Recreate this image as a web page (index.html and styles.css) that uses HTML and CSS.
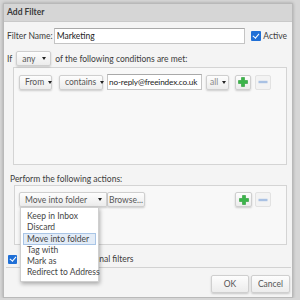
FILE: index.html
```html
<!DOCTYPE html>
<html>
<head>
	<meta charset="utf-8">
	<title>Add Filter</title>
	<link rel="stylesheet" href="styles.css">
</head>
<body>

<div class="dialog">
	<div class="dialog-head">Add Filter</div>
	<div class="dialog-body">

		<div class="row name-row">
			<label>Filter Name:</label>
			<input class="text name-input" type="text" value="Marketing">
			<span class="check"></span>
			<span>Active</span>
		</div>

		<div class="row if-row">
			<span>If</span>
			<span class="btn sel any-sel">any<i class="caret"></i></span>
			<span>of the following conditions are met:</span>
		</div>

		<div class="box cond-box">
			<div class="row">
				<span class="btn sel from-sel">From<i class="caret"></i></span>
				<span class="btn sel contains-sel">contains<i class="caret"></i></span>
				<input class="text mail-input" type="text" value="no-reply@freeindex.co.uk">
				<span class="btn sel all-sel">all<i class="caret"></i></span>
				<span class="btn icon-btn"><svg width="10" height="10" viewBox="0 0 10 10"><path d="M3.5 0.5h3v3h3v3h-3v3h-3v-3h-3v-3h3z" fill="#3bb54a" stroke="#2a9a36" stroke-width="0.6"/></svg></span>
				<span class="btn icon-btn off"><svg width="10" height="10" viewBox="0 0 10 10"><rect x="0.5" y="3.8" width="9" height="2.4" fill="#a9c1e3"/></svg></span>
			</div>
		</div>

		<div class="perform">Perform the following actions:</div>

		<div class="box act-box">
			<div class="row">
				<div class="menu-wrap">
					<span class="btn sel action-sel">Move into folder<i class="caret"></i></span>
					<ul class="menu">
						<li>Keep in Inbox</li>
						<li>Discard</li>
						<li class="on">Move into folder</li>
						<li>Tag with</li>
						<li>Mark as</li>
						<li>Redirect to Address</li>
					</ul>
				</div>
				<span class="btn browse">Browse...</span>
				<span class="grow"></span>
				<span class="btn icon-btn"><svg width="10" height="10" viewBox="0 0 10 10"><path d="M3.5 0.5h3v3h3v3h-3v3h-3v-3h-3v-3h3z" fill="#3bb54a" stroke="#2a9a36" stroke-width="0.6"/></svg></span>
				<span class="btn icon-btn off"><svg width="10" height="10" viewBox="0 0 10 10"><rect x="0.5" y="3.8" width="9" height="2.4" fill="#a9c1e3"/></svg></span>
			</div>
		</div>

		<div class="row stop-row">
			<span class="check"></span>
			<span>Don't process additional filters</span>
		</div>

		<div class="foot">
			<span class="btn ok">OK</span>
			<span class="btn cancel">Cancel</span>
		</div>
	</div>
</div>

</body>
</html>
```

FILE: styles.css
```css
body{margin: 0; background: #d6d6d6; font-family: Lato, "Liberation Sans", sans-serif; font-size: 8.5px; color: #3c3c3c;}
ul{margin: 0; padding: 0; list-style: none;}

.dialog{
	margin: 3px 7px 0 3px;
	height: 293px;
	background: #f4f4f4;
	border: 1px solid #b9b9b9;
	box-shadow: 0 0 3px rgba(0,0,0,0.25);
	white-space: nowrap;
}
.dialog-head{
	height: 17px;line-height: 17px;
	padding-left: 3px;
	background: #d6d6d6;
	border-bottom: 1px solid #c9c9c9;
	font-weight: bold;font-size: 8.5px;color: #3a3a3a;
}
.dialog-body{padding: 0 5px 0 3px;}

.row{display: flex;align-items: center;}
.name-row{margin-top: 6px;height: 16px;}
.text{
	box-sizing: border-box;
	height: 16px;
	border: 1px solid #c4c4c4;border-top-color: #a9a9a9;
	background: #fff;
	font: inherit;color: #222;
	padding: 0 2px;
}
.name-input{width: 206px;margin: 0 6px 0 1px;}
.check{
	display: inline-block;box-sizing: border-box;flex: none;
	width: 9px;height: 9px;margin-right: 2px;
	background: #1f6fd6;border-radius: 1px;
	position: relative;
}
.name-row .check{width: 10px;height: 10px;}
.check::after{
	content: "";position: absolute;
	left: 2.5px;top: 0.5px;width: 2.5px;height: 5px;
	border: solid #fff;border-width: 0 1.5px 1.5px 0;
	transform: rotate(40deg);
}

.btn{
	display: inline-flex;align-items: center;justify-content: center;box-sizing: border-box;flex: none;
	height: 15px;
	border: 1px solid #cfcfcf;border-radius: 2px;
	background: linear-gradient(#fdfdfd, #ececec);
	box-shadow: 0 1px 2px rgba(0,0,0,0.18);
	color: #555;
}
.sel{justify-content: space-between;padding: 0 4px 0 5px;}
.caret{
	width: 0;height: 0;margin-left: 4px;
	border-left: 2.5px solid transparent;border-right: 2.5px solid transparent;border-top: 3px solid #222;
}

.if-row{margin-top: 7px;height: 15px;}
.any-sel{width: 35px;margin: 0 4px 0 4px;}

.box{
	background: #f8f8f8;
	border: 1px solid #d4d4d4;
	box-sizing: border-box;
}
.cond-box{height: 98px;margin: 1px 0 0 6px;padding: 6px 0 0 5px;}
.from-sel{width: 33px;margin-right: 7px;}
.contains-sel{width: 44px;margin-right: 4px;}
.mail-input{width: 95px;margin-right: 4px;padding: 0 1px;font-size: 8.2px;letter-spacing: -0.15px;}
.all-sel{width: 23px;margin-right: 6px;padding: 0 3px;color: #888;}
.icon-btn{width: 16px;margin-right: 4px;}
.icon-btn.off{background: #f3f3f3;box-shadow: none;border-color: #e2e2e2;}

.perform{margin: 10px 0 0 3px;height: 9px;line-height: 9px;}
.act-box{height: 60px;margin: 1px 0 0 7px;padding: 6px 12px 0 4px;}
.act-box .icon-btn{width: 17px;margin-right: 3px;}
.act-box .icon-btn.off{width: 16px;}
.grow{flex: 1;}
.menu-wrap{position: relative;}
.action-sel{width: 88px;border-radius: 2px 0 0 2px;}
.browse{width: 38px;padding: 0 2px;}
.menu{
	position: absolute;left: 1px;top: 15px;z-index: 2;
	width: 79px;padding: 3px 3px 3px;box-sizing: border-box;
	background: #fff;
	border: 1px solid #cfcfcf;
	box-shadow: 1px 2px 4px rgba(0,0,0,0.3);
}
.menu li{height: 11px;line-height: 11px;padding-left: 3px;color: #444;}
.menu li.on{background: #e3ecf7;border: 1px solid #a9c5e6;margin: 0 -1px;height: 10px;line-height: 10px;}

.stop-row{margin: 9px 0 0 1px;height: 10px;}
.stop-row .check{margin-right: 3px;}

.foot{
	display: flex;justify-content: flex-end;
	margin: 3px -4px 0 -1px;padding: 7px 1px 0 0;
	border-top: 1px solid #d2d2d2;
}
.ok{width: 38px;height: 18px;margin-right: 2px;}
.cancel{width: 39px;height: 18px;}
```
